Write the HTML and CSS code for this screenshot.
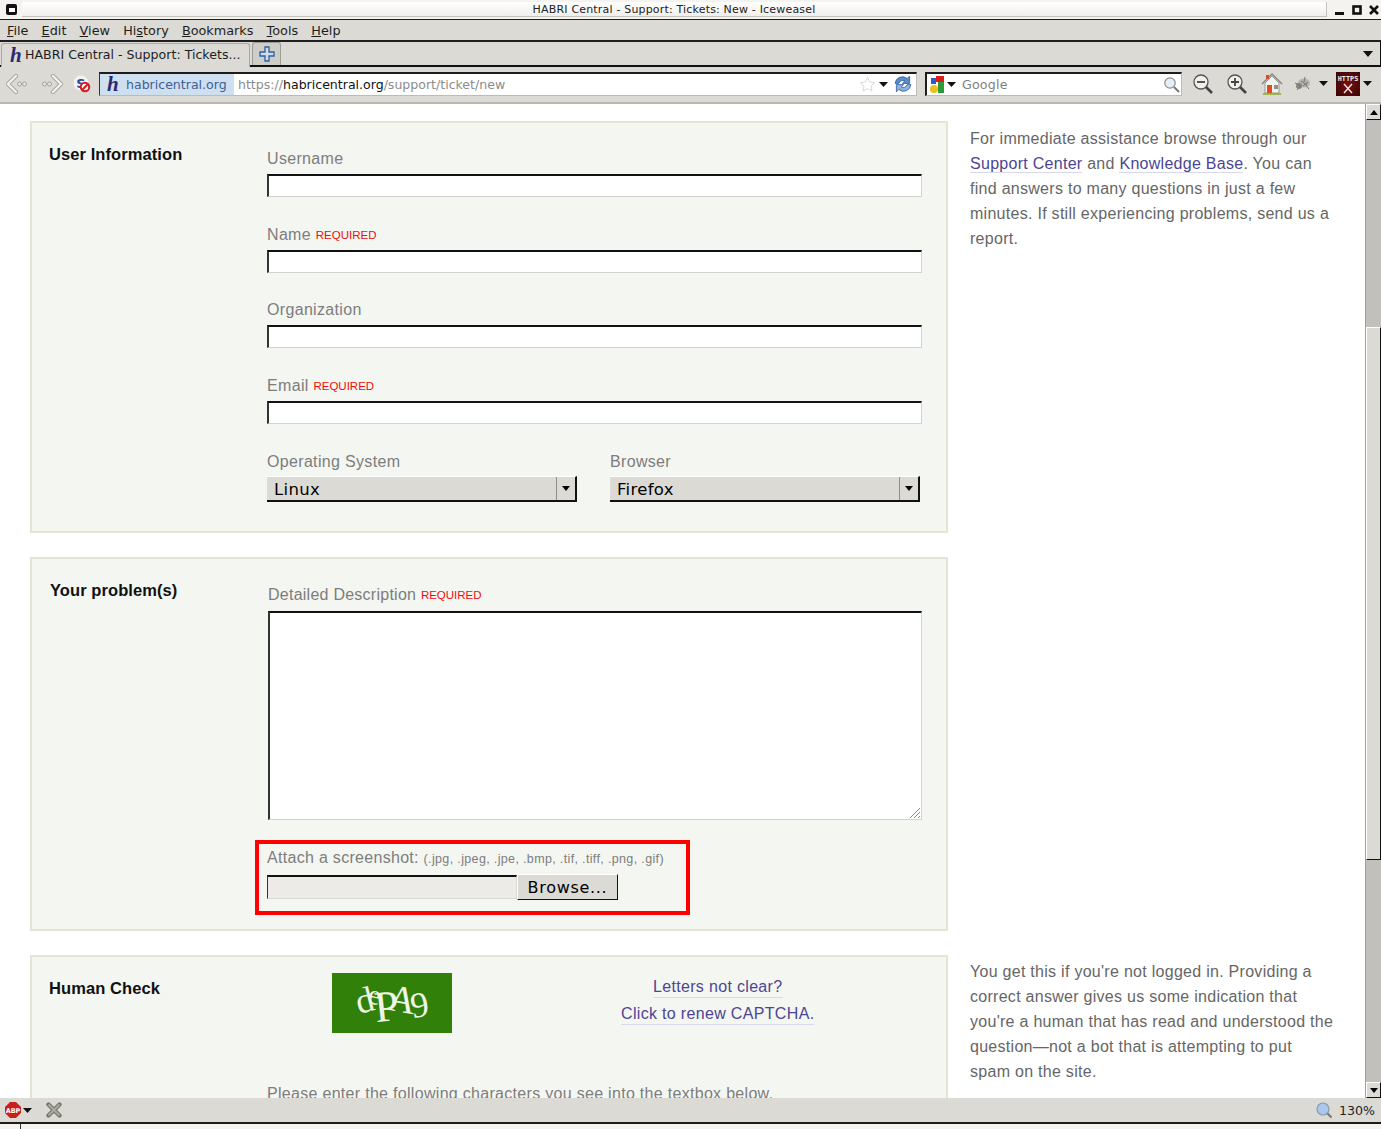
FILE: index.html
```html
<!DOCTYPE html>
<html lang="en">
<head>
<meta charset="utf-8">
<title>HABRI Central - Support: Tickets: New - Iceweasel</title>
<link rel="stylesheet" href="styles.css">
</head>
<body>
<div class="window">
  <header class="titlebar">
    <span class="wm-menu"><span></span></span>
    <div class="title-text">HABRI Central - Support: Tickets: New - Iceweasel</div>
    <div class="wm-buttons">
      <svg width="14" height="14" viewBox="0 0 14 14"><rect x="2" y="9" width="9" height="3" fill="#111"/></svg>
      <svg width="14" height="14" viewBox="0 0 14 14"><rect x="3.5" y="3.5" width="7" height="7" fill="none" stroke="#111" stroke-width="2.6"/></svg>
      <svg width="14" height="14" viewBox="0 0 14 14"><path d="M3 3l8 8M11 3l-8 8" stroke="#111" stroke-width="2.6"/></svg>
    </div>
  </header>
  <nav class="menubar">
    <span><u>F</u>ile</span><span><u>E</u>dit</span><span><u>V</u>iew</span><span>Hi<u>s</u>tory</span><span><u>B</u>ookmarks</span><span><u>T</u>ools</span><span><u>H</u>elp</span>
  </nav>
  <div class="tabbar">
    <div class="tab"><span class="h-logo">h</span><span>HABRI Central - Support: Tickets...</span></div>
    <div class="newtab">
      <svg width="16" height="16" viewBox="0 0 16 16"><path d="M6 1h4v5h5v4h-5v5H6v-5H1V6h5z" fill="#cfdcec" stroke="#2f5f9f" stroke-width="1.3"/></svg>
    </div>
    <svg class="tab-arrow" width="10" height="6" viewBox="0 0 10 6"><path d="M0 0h10L5 6z" fill="#111"/></svg>
  </div>
  <div class="navbar">
    <svg class="nav-back" width="22" height="20" viewBox="0 0 22 20"><path d="M10 2L2 10l8 8" fill="none" stroke="#a8a7a1" stroke-width="4.200" stroke-linejoin="round" stroke-linecap="round"/><path d="M10 2L2 10l8 8" fill="none" stroke="#f4f4f1" stroke-width="2.200" stroke-linecap="round"/><circle cx="13.500" cy="10" r="2" fill="#e8e7e3" stroke="#a3a29c"/><circle cx="18.500" cy="10" r="2" fill="#e8e7e3" stroke="#a3a29c"/></svg>
    <svg class="nav-fwd" width="22" height="20" viewBox="0 0 22 20"><path d="M12 2l8 8-8 8" fill="none" stroke="#a8a7a1" stroke-width="4.200" stroke-linejoin="round" stroke-linecap="round"/><path d="M12 2l8 8-8 8" fill="none" stroke="#f4f4f1" stroke-width="2.200" stroke-linecap="round"/><circle cx="3.500" cy="10" r="2" fill="#e8e7e3" stroke="#a3a29c"/><circle cx="8.500" cy="10" r="2" fill="#e8e7e3" stroke="#a3a29c"/></svg>
    <svg class="nav-noscript" width="18" height="18" viewBox="0 0 18 18"><circle cx="8" cy="8" r="7.500" fill="#f4f4f4"/><text x="8" y="13" text-anchor="middle" class="ns-letter">S</text><circle cx="12" cy="12" r="4.200" fill="#fff" stroke="#d81920" stroke-width="2"/><path d="M9 15l6-6" stroke="#d81920" stroke-width="2"/></svg>
    <div class="urlbar">
      <div class="identity"><span class="h-logo">h</span><span>habricentral.org</span></div>
      <div class="url"><span class="dim">https://</span>habricentral.org<span class="dim">/support/ticket/new</span></div>
      <svg width="17" height="17" viewBox="0 0 18 18"><path d="M9 1.500l2.300 4.900 5.200.7-3.800 3.600 1 5.300L9 13.400 4.300 16l1-5.300-3.800-3.600 5.200-.7z" fill="#fff" stroke="#d6d6d2"/></svg>
      <svg class="dd url-dd" width="9" height="5" viewBox="0 0 9 5"><path d="M0 0h9L4.500 5z" fill="#111"/></svg>
      <svg class="reload" width="18" height="18" viewBox="1 1 15 15"><path d="M2 8a6 6 0 0 1 10-4l2-2v6H8l2-2a3.500 3.500 0 0 0-5 2z" fill="#5a8ccc" stroke="#2f5f9f" stroke-width=".7"/><path d="M15 9a6 6 0 0 1-10 4l-2 2V9h6l-2 2a3.500 3.500 0 0 0 5-2z" fill="#8fb2de" stroke="#2f5f9f" stroke-width=".7"/></svg>
    </div>
    <div class="searchbar">
      <svg width="16" height="19" viewBox="0 0 16 19"><rect x="7" y="1" width="8" height="6" fill="#dd1c1c"/><rect x="2" y="3" width="5" height="6" fill="#2a5fc0"/><rect x="9" y="7" width="6" height="11" fill="#2f9a3a"/><ellipse cx="5" cy="14" rx="4" ry="4" fill="#e9c01e"/></svg>
      <svg class="dd" width="9" height="5" viewBox="0 0 9 5"><path d="M0 0h9L4.500 5z" fill="#111"/></svg>
      <span class="search-text">Google</span>
      <svg width="17" height="17" viewBox="0 0 17 17"><circle cx="7" cy="7" r="5.200" fill="#e8eef5" stroke="#8c8c8c" stroke-width="1.200"/><path d="M11 11l5 5" stroke="#777" stroke-width="2"/></svg>
    </div>
    <svg class="tool zoom-out" width="22" height="22" viewBox="0 0 22 22"><circle cx="9" cy="9" r="7" fill="#f1f0ec" stroke="#555" stroke-width="1.300"/><path d="M5 9h8" stroke="#444" stroke-width="1.800"/><path d="M14 14l6 6" stroke="#444" stroke-width="2.600"/></svg>
    <svg class="tool zoom-in" width="22" height="22" viewBox="0 0 22 22"><circle cx="9" cy="9" r="7" fill="#f1f0ec" stroke="#555" stroke-width="1.300"/><path d="M5 9h8M9 5v8" stroke="#444" stroke-width="1.800"/><path d="M14 14l6 6" stroke="#444" stroke-width="2.600"/></svg>
    <svg class="tool home" width="22" height="22" viewBox="0 0 22 22"><path d="M1 11L11 1l10 10" fill="none" stroke="#8a8a84" stroke-width="1.500"/><path d="M4 10l7-7 7 7v10H4z" fill="#f2f2ee" stroke="#9a9a94"/><rect x="5" y="2" width="3" height="4" fill="#c9552a"/><rect x="6" y="12" width="5" height="8" fill="#d8501a"/><rect x="13" y="12" width="4" height="4" fill="#8f908c"/><path d="M2 21h18" stroke="#8fae2e" stroke-width="1.600"/></svg>
    <svg class="tool bug" width="18" height="18" viewBox="0 0 18 18"><ellipse cx="10" cy="8" rx="6" ry="4.500" fill="#b5b5b0"/><circle cx="5" cy="11" r="3" fill="#85857f"/><path d="M1 8l5 2M3 15l4-4M11 2l-1 5M15 14l-4-5M7 6l6 4M9 11l5-4" stroke="#777772"/></svg>
    <svg class="dd bug-dd" width="9" height="5" viewBox="0 0 9 5"><path d="M0 0h9L4.500 5z" fill="#111"/></svg>
    <div class="https-box"><span>HTTPS</span>
      <svg width="12" height="11" viewBox="0 0 12 11"><path d="M2 1l8 9M10 1l-8 9" stroke="#e8dede" stroke-width="1.500"/></svg>
    </div>
    <svg class="dd" width="9" height="5" viewBox="0 0 9 5"><path d="M0 0h9L4.500 5z" fill="#111"/></svg>
  </div>

  <div class="viewport">
    <main class="page">
      <div class="row">
        <section class="card card-user">
          <h3 class="card-title">User Information</h3>
          <div class="fields">
            <label class="field">Username<span class="text-input"></span></label>
            <label class="field">Name <em>REQUIRED</em><span class="text-input"></span></label>
            <label class="field">Organization<span class="text-input"></span></label>
            <label class="field">Email <em>REQUIRED</em><span class="text-input"></span></label>
            <div class="selects">
              <label class="field-sel">Operating System<span class="select"><span class="sel-val">Linux</span><span class="sel-btn"><svg width="8" height="5" viewBox="0 0 8 5"><path d="M0 0h8L4 5z" fill="#000"/></svg></span></span></label>
              <label class="field-sel">Browser<span class="select"><span class="sel-val">Firefox</span><span class="sel-btn"><svg width="8" height="5" viewBox="0 0 8 5"><path d="M0 0h8L4 5z" fill="#000"/></svg></span></span></label>
            </div>
          </div>
        </section>
        <aside class="aside">For immediate assistance browse through our <a>Support Center</a> and <a>Knowledge Base</a>. You can find answers to many questions in just a few minutes. If still experiencing problems, send us a report.</aside>
      </div>

      <div class="row">
        <section class="card card-problem">
          <h3 class="card-title">Your problem(s)</h3>
          <div class="fields">
            <label class="field">Detailed Description <em>REQUIRED</em>
              <span class="textarea"><svg class="grip" width="12" height="12" viewBox="0 0 12 12"><path d="M11 1L1 11M11 5l-6 6M11 9l-2 2" stroke="#8a8a86"/></svg></span>
            </label>
            <div class="attach">
              <div class="attach-label">Attach a screenshot: <small>(.jpg, .jpeg, .jpe, .bmp, .tif, .tiff, .png, .gif)</small></div>
              <div class="file-row"><span class="file-input"></span><span class="browse">Browse...</span></div>
            </div>
          </div>
        </section>
      </div>

      <div class="row">
        <section class="card card-human">
          <h3 class="card-title">Human Check</h3>
          <div class="human-body">
            <div class="captcha-row">
              <div class="captcha"><span class="c1">d</span><span class="c2">e</span><span class="c3">P</span><span class="c4">A</span><span class="c5">9</span></div>
              <div class="renew"><a>Letters not clear?</a><a>Click to renew CAPTCHA.</a></div>
            </div>
            <p class="human-hint">Please enter the following characters you see into the textbox below.</p>
          </div>
        </section>
        <aside class="aside">You get this if you're not logged in. Providing a correct answer gives us some indication that you're a human that has read and understood the question—not a bot that is attempting to put spam on the site.</aside>
      </div>
    </main>
    <div class="scrollbar">
      <span class="sb-btn"><svg width="8" height="5" viewBox="0 0 8 5"><path d="M4 0l4 5H0z" fill="#000"/></svg></span>
      <span class="sb-track sb-before"></span>
      <span class="sb-thumb"></span>
      <span class="sb-track sb-after"></span>
      <span class="sb-btn"><svg width="8" height="5" viewBox="0 0 8 5"><path d="M0 0h8L4 5z" fill="#000"/></svg></span>
    </div>
  </div>

  <footer class="statusbar">
    <svg class="abp" width="16" height="16" viewBox="0 0 16 16"><path d="M5 0h6l5 5v6l-5 5H5l-5-5V5z" fill="#c9201c"/><text x="8" y="11" text-anchor="middle" class="abp-text">ABP</text></svg>
    <svg class="dd" width="9" height="5" viewBox="0 0 9 5"><path d="M0 0h9L4.500 5z" fill="#111"/></svg>
    <svg class="status-x" width="16" height="16" viewBox="0 0 16 16"><path d="M2.500 2.500l11 11M13.500 2.500l-11 11" stroke="#77776f" stroke-width="4.400" stroke-linecap="round"/><path d="M2.500 2.500l11 11M13.500 2.500l-11 11" stroke="#a9a9a2" stroke-width="2"/></svg>
    <svg class="status-zoom" width="17" height="17" viewBox="0 0 17 17"><circle cx="7" cy="7" r="6" fill="#a9c8ec" stroke="#8b9bad" stroke-width="1.200"/><path d="M11.500 11.500l4 4" stroke="#777" stroke-width="2.200"/></svg>
    <span class="status-zoom-text">130%</span>
  </footer>
  <div class="bottom-strip"><span></span></div>
</div>
</body>
</html>
```

FILE: styles.css
```css
* { box-sizing: border-box; }
html, body { margin: 0; padding: 0; height: 100%; overflow: hidden; background: #fff; }
a { color: #4c4593; border-bottom: 1px solid #d9d8ea; }
.window { width: 1381px; height: 1129px; display: flex; flex-direction: column; font-family: "DejaVu Sans", sans-serif; color: #111; }

.titlebar { height: 19px; display: flex; align-items: center; background: #f4f3f0; padding: 2px 0 2px 6px; }
.wm-menu { width: 11px; height: 11px; background: #111; border-radius: 2px; display: flex; align-items: center; justify-content: center; margin-right: 5px; flex: none; }
.wm-menu span { width: 6px; height: 4px; background: #fff; }
.title-text { flex: 1; height: 15px; text-align: center; font-size: 11px; line-height: 15px; color: #222; background: linear-gradient(#fff, #f0efec); border-bottom: 1px solid #c4c3bd; border-right: 1px solid #c4c3bd; letter-spacing: .18px; }
.wm-buttons { display: flex; width: 54px; padding-left: 6px; gap: 3px; }
.wm-buttons svg { flex: none; }

.menubar { height: 23px; display: flex; gap: 13.2px; align-items: center; padding: 0 7px; background: #dcdad5; border-top: 1px solid #1f1f1f; border-bottom: 2px solid #1f1f1f; font-size: 12.8px; color: #1e1e1e; }
.tabbar { height: 25px; display: flex; align-items: flex-end; background: #dcdad5; border-bottom: 2px solid #111; padding-left: 1px; position: relative; border-right: 1px solid #111; }
.tab { width: 249px; height: 24px; margin-bottom: -2px; display: flex; align-items: center; gap: 4px; padding: 0 8px 2px; background: #dcdad5; border: 1px solid #aaa9a3; border-bottom: none; border-radius: 3px 3px 0 0; font-size: 12.6px; color: #1e1e1e; position: relative; white-space: nowrap; }
.newtab { width: 29px; height: 23px; margin-left: 2px; display: flex; align-items: center; justify-content: center; background: #cfcdc8; border: 1px solid #9d9c96; border-bottom: none; border-radius: 3px 3px 0 0; }
.tab-arrow { position: absolute; right: 7px; top: 9px; }
.h-logo { font-family: "Liberation Serif", serif; font-style: italic; font-weight: bold; font-size: 21px; line-height: 16px; color: #2a2a72; width: 11px; }

.navbar { height: 37px; display: flex; align-items: center; background: #dcdad5; border-bottom: 2px solid #b8b7b1; padding: 0 5px 2px 6px; }
.nav-back { margin-right: 13px; flex: none; }
.nav-fwd { margin-right: 10px; flex: none; }
.nav-noscript { margin-right: 8px; flex: none; }
.ns-letter { font-family: "DejaVu Sans", sans-serif; font-weight: bold; font-size: 13px; fill: #234a9a; }
.urlbar { width: 818px; height: 24px; display: flex; align-items: center; background: #fff; border: 1px solid #bbb; border-top: 2px solid #1d1d1d; border-left: 1px solid #333; font-size: 12.55px; padding-right: 4px; gap: 3px; flex: none; }
.identity { height: 100%; width: 134px; flex: none; display: flex; align-items: center; gap: 8px; padding-left: 7px; background: #cedff0; color: #3c5f97; }
.url { flex: 1; padding-left: 1px; color: #111; white-space: nowrap; }
.url-dd { margin-right: 3px; }
.dim { color: #8c8c8c; }
.dd { flex: none; }
.searchbar { width: 257px; height: 24px; margin-left: 8px; flex: none; display: flex; align-items: center; background: #fff; border: 1px solid #bbb; border-top: 2px solid #1d1d1d; border-left: 2px solid #1d1d1d; gap: 2px; padding-left: 2px; padding-right: 1px; font-size: 12.6px; }
.search-text { flex: 1; padding-left: 4px; color: #7f7f7f; letter-spacing: .2px; }
.tool { flex: none; }
.zoom-out { margin-left: 10px; }
.zoom-in { margin-left: 12px; }
.home { margin-left: 13px; }
.bug { margin-left: 11px; }
.bug-dd { margin-left: 7px; }
.https-box { width: 24px; height: 24px; flex: none; margin: 0 3px 0 8px; background: radial-gradient(circle, #7a0d0d, #3a0606); display: flex; flex-direction: column; align-items: center; color: #eee; font-family: "DejaVu Sans Mono", monospace; font-size: 6.8px; font-weight: bold; line-height: 8px; padding-top: 3px; }

.viewport { flex: 1; min-height: 0; display: flex; background: #fff; overflow: hidden; }
.page { flex: 1; min-width: 0; display: flex; flex-direction: column; gap: 24px; padding: 17px 0 0 30px; font-family: "Liberation Sans", Arial, sans-serif; }
.row { display: flex; flex: none; }
.card { width: 918px; flex: none; display: flex; background: #f4f6f1; border: 2px solid #e1e5d2; }
.card-user { height: 412px; padding: 21px 24px 0 17px; }
.card-problem { height: 374px; padding: 21px 24px 0 18px; }
.card-human { height: 260px; padding: 21px 24px 0 17px; }
.card-title { width: 218px; flex: none; margin: 0; font-size: 16.5px; line-height: 20px; font-weight: bold; color: #111; letter-spacing: .08px; }
.fields { flex: 1; min-width: 0; }
.field { display: block; font-size: 16px; line-height: 20px; color: #7d7d7d; letter-spacing: .33px; padding-top: 5px; margin-bottom: 22.67px; }
.card-problem .field { margin-bottom: 20px; letter-spacing: .25px; }
.field em { font-style: normal; font-size: 11.5px; color: #ef0d0d; letter-spacing: 0; vertical-align: 1.5px; line-height: 1; }
.text-input { display: block; height: 23px; margin-top: 5px; background: #fff; border: 1px solid #d3d2cc; border-top: 2px solid #111; border-left: 2px solid #333; }
.selects { display: flex; gap: 33px; margin-top: 28px; }
.field-sel { display: block; width: 310px; font-size: 16px; line-height: 20px; color: #7d7d7d; letter-spacing: .33px; }
.select { display: flex; height: 26px; margin-top: 4px; background: #dcdad5; border-top: 1px solid #fff; border-right: 2px solid #111; border-bottom: 2px solid #111; align-items: center; }
.sel-val { flex: 1; padding: 3px 0 0 7px; font-family: "DejaVu Sans", sans-serif; font-size: 16.5px; color: #000; letter-spacing: .3px; }
.sel-btn { width: 19px; height: 100%; display: flex; align-items: center; justify-content: center; border-left: 1px solid #8f8e88; }
.textarea { display: block; position: relative; height: 209px; margin-top: 6px; background: #fff; border: 1px solid #d3d2cc; border-top: 2px solid #111; border-left: 2px solid #333; }
.grip { position: absolute; right: 0; bottom: 0; }
.attach { width: 435px; height: 75px; margin-left: -13px; padding: 4px 0 0 8px; border: 4px solid #ff0000; }
.attach-label { font-size: 16px; line-height: 20px; color: #7d7d7d; letter-spacing: .3px; white-space: nowrap; }
.attach-label small { font-size: 12.5px; letter-spacing: .35px; }
.file-row { display: flex; align-items: center; margin-top: 5px; }
.file-input { width: 250px; height: 24px; background: #edebe7; border: 1px solid #d9d8d2; border-top: 2px solid #111; border-left: 1px solid #333; }
.browse { width: 101px; height: 26px; text-align: center; background: #dcdad5; border-top: 1px solid #fff; border-left: 1px solid #fff; border-right: 1px solid #111; border-bottom: 1px solid #111; font-family: "DejaVu Sans", sans-serif; font-size: 16px; line-height: 26px; color: #000; letter-spacing: .7px; }

.human-body { flex: 1; min-width: 0; }
.captcha-row { display: flex; margin-top: -5px; padding-left: 65px; }
.captcha { width: 120px; height: 60px; flex: none; background: #31800a; display: flex; align-items: center; justify-content: center; overflow: hidden; font-family: "Liberation Serif", serif; color: #eef5e6; padding-bottom: 2px; }
.captcha span { display: inline-block; }
.c1 { font-size: 36px; transform: rotate(-14deg) translateY(-2px); }
.c2 { font-size: 28px; margin-left: -7px; transform: rotate(12deg) translateY(-7px); }
.c3 { font-size: 44px; margin-left: -6px; transform: rotate(-6deg) translateY(4px); }
.c4 { font-size: 38px; margin-left: -10px; transform: rotate(10deg) translateY(-3px); }
.c5 { font-size: 36px; margin-left: -6px; transform: rotate(-10deg) translateY(3px); }
.renew { margin-left: 169px; display: flex; flex-direction: column; align-items: center; font-size: 16px; line-height: 20px; letter-spacing: .33px; gap: 6px; padding-top: 4px; }
.renew a { display: block; }
.human-hint { margin: 51px 0 0; font-size: 16px; line-height: 20px; color: #7d7d7d; letter-spacing: .3px; white-space: nowrap; }

.aside { width: 388px; flex: none; padding: 5px 0 0 22px; font-size: 16px; line-height: 25px; color: #666; letter-spacing: .28px; }
.card-human + .aside { padding-top: 4px; }

.scrollbar { width: 16px; flex: none; display: flex; flex-direction: column; background: #c2c0ba; border-left: 1px solid #a09f99; }
.sb-btn { height: 16px; flex: none; display: flex; align-items: center; justify-content: center; background: #dcdad5; border-top: 1px solid #fff; border-left: 1px solid #fff; border-right: 1px solid #111; border-bottom: 1px solid #111; }
.sb-before { height: 207px; flex: none; background: #c2c0ba; }
.sb-thumb { height: 533px; flex: none; background: #dcdad5; border-top: 1px solid #fff; border-left: 1px solid #fff; border-right: 1px solid #111; border-bottom: 1px solid #111; }
.sb-after { flex: 1; background: #c2c0ba; }

.statusbar { height: 26px; flex: none; display: flex; align-items: center; background: #dcdad5; border-bottom: 2px solid #1d1d1d; padding: 0 6px 0 5px; font-size: 12.6px; color: #222; position: relative; }
.abp { flex: none; }
.abp-text { font-family: "DejaVu Sans", sans-serif; font-size: 6.5px; font-weight: bold; fill: #fff; }
.statusbar .dd { margin-left: 2px; }
.status-x { margin-left: 14px; flex: none; }
.status-zoom { margin-left: auto; flex: none; }
.status-zoom-text { margin-left: 6px; }
.bottom-strip { height: 5px; flex: none; background: #f4f3f0; padding-left: 20px; }
.bottom-strip span { display: block; width: 1px; height: 5px; background: #333; }
```
